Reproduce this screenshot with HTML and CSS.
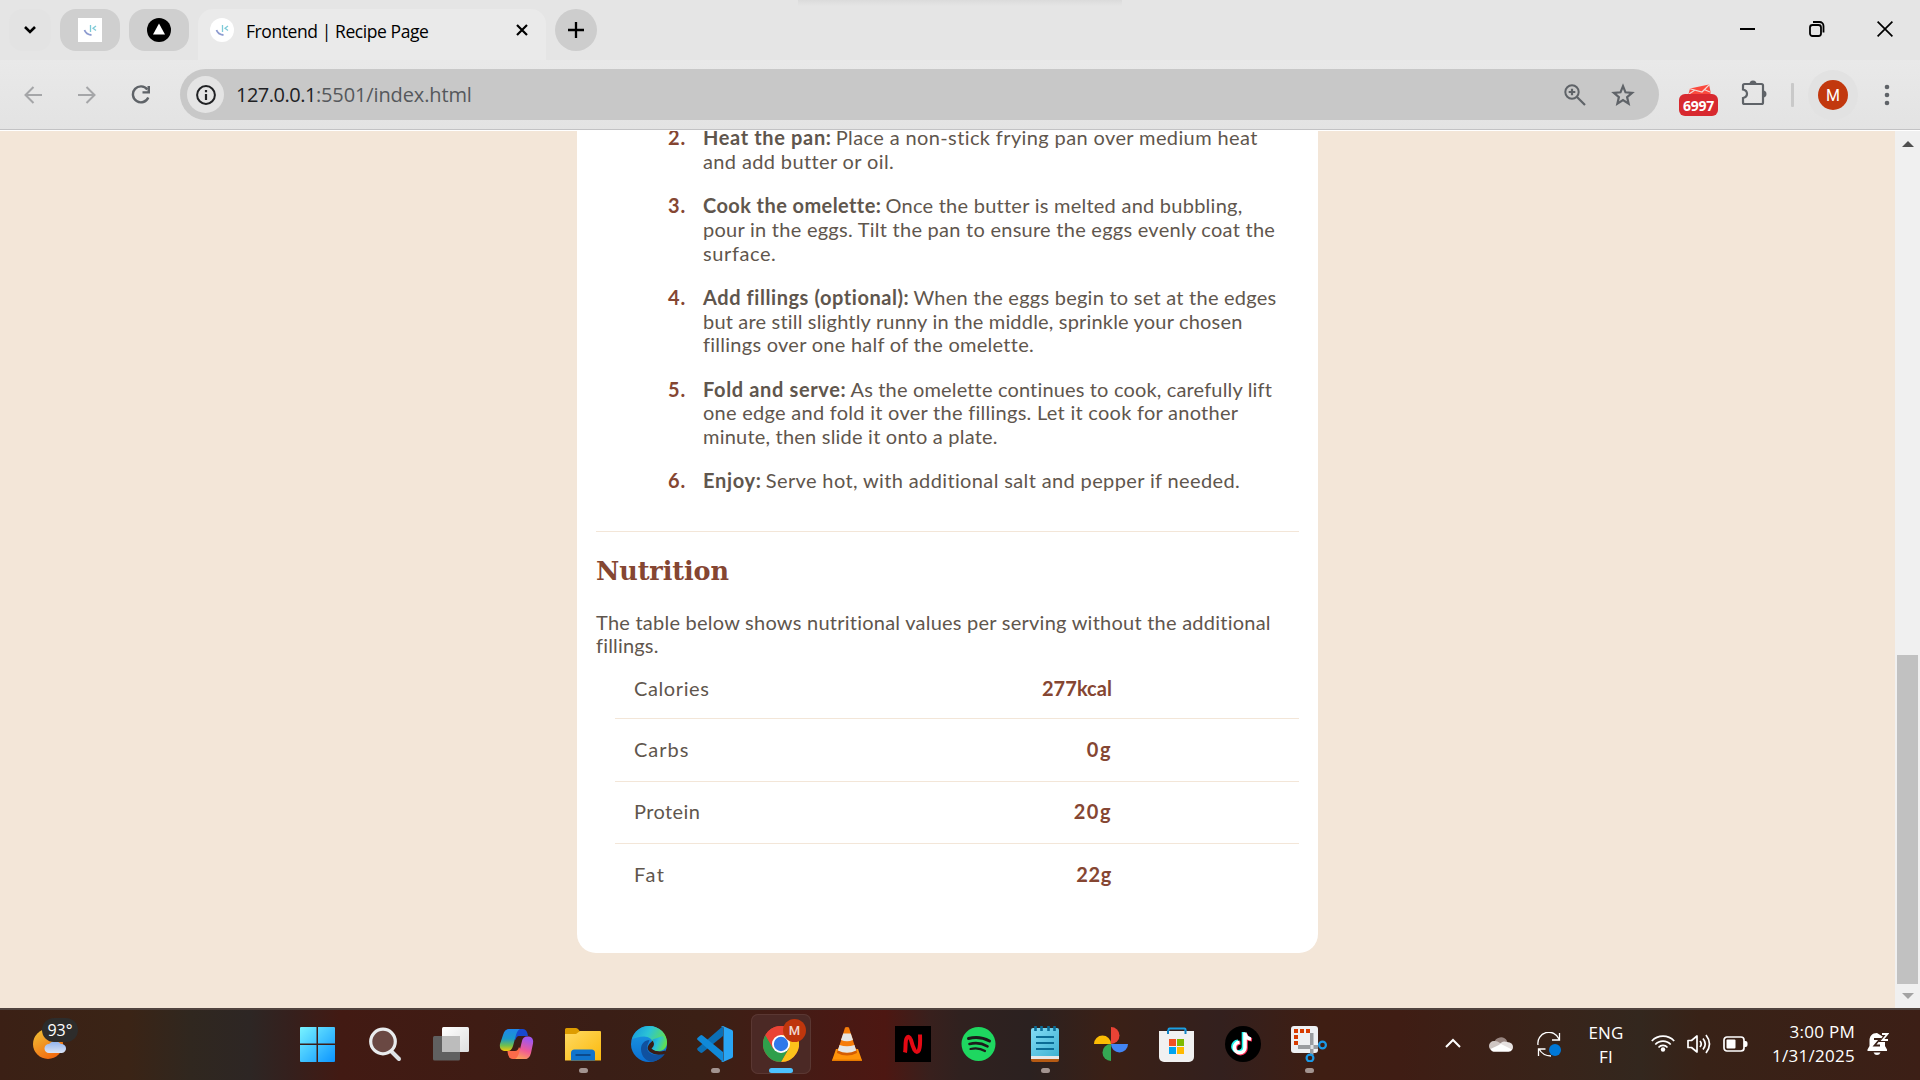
FILE: index.html
```html
<!DOCTYPE html>
<html lang="en">
<head>
<meta charset="utf-8">
<title>Frontend | Recipe Page</title>
<link rel="stylesheet" href="styles.css">
</head>
<body>
<div class="screen">
  <header class="tabstrip">
    <div class="tab-search"><svg width="14" height="10" viewBox="0 0 14 10"><path d="M2 2l5 5 5-5" fill="none" stroke="#000" stroke-width="2.6"/></svg></div>
    <div class="pinned"><svg width="24" height="24" viewBox="0 0 24 24"><rect width="24" height="24" fill="#fff"/><path d="M6.500 12q1.500 4.500 7 5" fill="none" stroke="#8d9bd0" stroke-width="1.800"/><path d="M12.500 7v7M18 8l-3 2.300 3 2.300" fill="none" stroke="#7fcbd8" stroke-width="1.300"/></svg></div>
    <div class="pinned pinned-next"><svg width="24" height="24" viewBox="0 0 24 24"><circle cx="12" cy="12" r="12"/><path d="M12 5.500L18 16.500H6z" fill="#fff"/></svg></div>
    <div class="tab">
      <svg width="24" height="24" viewBox="0 0 24 24"><circle cx="12" cy="12" r="12" fill="#fff"/><path d="M6.500 12q1.500 4.500 7 5" fill="none" stroke="#8d9bd0" stroke-width="1.800"/><path d="M12.500 7v7M18 8l-3 2.300 3 2.300" fill="none" stroke="#7fcbd8" stroke-width="1.300"/></svg>
      <span class="tab-title">Frontend | Recipe Page</span>
      <svg class="tab-close" width="12" height="12" viewBox="0 0 12 12"><path d="M1 1l10 10M11 1L1 11" stroke="#000" stroke-width="2.200"/></svg>
    </div>
    <div class="new-tab"><svg width="16" height="16" viewBox="0 0 16 16"><path d="M8 0v16M0 8h16" stroke="#000" stroke-width="2.300"/></svg></div>
    <div class="window-controls">
      <svg width="16" height="16" viewBox="0 0 16 16"><path d="M0 8h15" stroke="#000" stroke-width="2"/></svg>
      <svg width="16" height="16" viewBox="0 0 16 16"><rect x="1" y="4" width="11" height="11" rx="2.500" fill="none" stroke="#000" stroke-width="1.800"/><path d="M4 1h6.500a4 4 0 0 1 4 4v6.500" fill="none" stroke="#000" stroke-width="1.800"/></svg>
      <svg width="16" height="16" viewBox="0 0 16 16"><path d="M.6.600l14.800 14.800M15.400.600L.6 15.400" stroke="#000" stroke-width="1.700"/></svg>
    </div>
  </header>

  <div class="toolbar">
    <div class="nav">
      <svg width="18" height="18" viewBox="0 0 18 18"><path d="M18 9H1.500M9.500 1L1.500 9l8 8" fill="none" stroke="#a5a6a8" stroke-width="2"/></svg>
      <svg width="18" height="18" viewBox="0 0 18 18"><path d="M0 9h16.500M8.500 1l8 8-8 8" fill="none" stroke="#a5a6a8" stroke-width="2"/></svg>
      <svg width="20" height="20" viewBox="0 0 20 20"><path d="M17.300 12.500a8 8 0 1 1-1-8" fill="none" stroke="#5f6368" stroke-width="2.400"/><path d="M19 1v7.500h-7.500V6.200h5V1z" fill="#5f6368"/></svg>
    </div>
    <div class="omnibox">
      <span class="site-info"><svg width="20" height="20" viewBox="0 0 20 20"><circle cx="10" cy="10" r="8.900" fill="none" stroke="#202124" stroke-width="2"/><path d="M10 9v6M10 5v2.200" stroke="#202124" stroke-width="2.200"/></svg></span>
      <span class="url"><span class="host">127.0.0.1</span><span class="path">:5501/index.html</span></span>
      <svg class="zoom-icon" width="22" height="22" viewBox="0 0 22 22"><circle cx="8" cy="8" r="6.700" fill="none" stroke="#5f6368" stroke-width="2"/><path d="M8 4.700v6.600M4.700 8h6.600M13 13l8 8" fill="none" stroke="#5f6368" stroke-width="2.200"/></svg>
      <svg width="24" height="24" viewBox="0 0 24 24"><path d="M12 3.200l2.500 6.100 6.600.5-5 4.300 1.500 6.500-5.600-3.500-5.600 3.500 1.500-6.500-5-4.300 6.600-.5z" fill="none" stroke="#5f6368" stroke-width="2.200"/></svg>
    </div>
    <div class="mail">
      <svg width="24" height="10" viewBox="0 0 24 10"><path d="M1.500 10L3 4.500 22 .500l1.500 7V10z" fill="#fb4a3e"/><path d="M2 4.500l13 3.500 7.500-7.500M2 10l6-4M23 8l-6-2.500" fill="none" stroke="#f2dcda" stroke-width="1.200"/></svg>
      <span class="mail-count">6997</span>
    </div>
    <svg class="puzzle" width="26" height="26" viewBox="0 0 26 26"><path d="M3.500 4h17a1.500 1.500 0 0 1 1.500 1.500v17a1.500 1.500 0 0 1-1.500 1.500h-17a1.500 1.500 0 0 1-1.500-1.500V18q4-1 4-4.300T2 9.500v-4A1.500 1.500 0 0 1 3.500 4z" fill="none" stroke="#5f6368" stroke-width="2.200"/><path d="M8.500 4a3.500 3.500 0 0 1 7 0zM22 10.500a3.500 3.500 0 0 1 0 7z" fill="#5f6368"/></svg>
    <span class="divider"></span>
    <span class="avatar-halo"><span class="avatar">M</span></span>
    <svg class="menu" width="6" height="22" viewBox="0 0 6 22"><g fill="#5f6368"><circle cx="3" cy="3" r="2.300"/><circle cx="3" cy="11" r="2.300"/><circle cx="3" cy="19" r="2.300"/></g></svg>
  </div>

  <main class="viewport">
    <div class="page">
      <article class="card">
        <ol class="steps">
          <li><span class="num">2.</span><p><span class="line"><b class="ls64">Heat the pan:</b> <span class="ls38">Place a non-stick frying pan over medium heat</span></span><span class="line ls37">and add butter or oil.</span></p></li>
          <li><span class="num">3.</span><p><span class="line"><b class="ls41">Cook the omelette:</b> <span class="ls25">Once the butter is melted and bubbling,</span></span><span class="line ls26">pour in the eggs. Tilt the pan to ensure the eggs evenly coat the</span><span class="line ls60">surface.</span></p></li>
          <li><span class="num">4.</span><p><span class="line"><b class="ls57">Add fillings (optional):</b> <span class="ls25">When the eggs begin to set at the edges</span></span><span class="line ls18">but are still slightly runny in the middle, sprinkle your chosen</span><span class="line ls26">fillings over one half of the omelette.</span></p></li>
          <li><span class="num">5.</span><p><span class="line"><b class="ls64">Fold and serve:</b> <span class="ls16">As the omelette continues to cook, carefully lift</span></span><span class="line ls27">one edge and fold it over the fillings. Let it cook for another</span><span class="line ls21">minute, then slide it onto a plate.</span></p></li>
          <li><span class="num">6.</span><p><span class="line"><b class="ls70">Enjoy:</b> <span class="ls37">Serve hot, with additional salt and pepper if needed.</span></span></p></li>
        </ol>
        <section class="nutrition">
          <h2>Nutrition</h2>
          <p><span class="line ls24">The table below shows nutritional values per serving without the additional</span><span class="line ls18">fillings.</span></p>
          <dl class="facts">
            <div class="fact"><dt class="ls60">Calories</dt><dd class="ls04">277kcal</dd></div>
            <div class="fact"><dt class="ls100">Carbs</dt><dd class="ls150">0g</dd></div>
            <div class="fact"><dt class="ls41">Protein</dt><dd class="ls150">20g</dd></div>
            <div class="fact"><dt class="ls150">Fat</dt><dd class="ls64">22g</dd></div>
          </dl>
        </section>
      </article>
    </div>
    <div class="scrollbar">
      <svg width="12" height="6" viewBox="0 0 12 6"><path d="M0 6l6-6 6 6z" fill="#505050"/></svg>
      <span class="thumb"></span>
      <svg width="12" height="6" viewBox="0 0 12 6"><path d="M0 0l6 6 6-6z" fill="#a3a3a3"/></svg>
    </div>
  </main>

  <footer class="taskbar">
    <div class="weather">
      <svg width="34" height="32" viewBox="0 0 34 32"><defs><linearGradient id="sun" x1="0" y1="0" x2=".6" y2="1"><stop offset="0" stop-color="#efc437"/><stop offset="1" stop-color="#f26a10"/></linearGradient><linearGradient id="cl" x1="0" y1="0" x2="0" y2="1"><stop offset="0" stop-color="#8fb2ee"/><stop offset="1" stop-color="#dbe4f6"/></linearGradient></defs><circle cx="15" cy="16" r="15" fill="url(#sun)"/><path d="M16 25a4.500 4.500 0 0 1 0-9 8 8 0 0 1 12 0 4.500 4.500 0 0 1 1 9z" fill="url(#cl)"/></svg>
      <span class="temp">93°</span>
    </div>
    <nav class="apps">
      <div class="app"><svg width="36" height="36" viewBox="0 0 36 36"><defs><linearGradient id="w" gradientUnits="userSpaceOnUse" x1="0" y1="0" x2="36" y2="36"><stop offset="0" stop-color="#7af5ff"/><stop offset="1" stop-color="#0a93ff"/></linearGradient></defs><path d="M0 2a1 1 0 0 1 1-1h15.500v16.500H0zM18 1h16a1 1 0 0 1 1 1v15.500H18zM0 19h16.500v17H1a1 1 0 0 1-1-1zM18 19h17v16a1 1 0 0 1-1 1H18z" fill="url(#w)"/></svg></div>
      <div class="app"><svg width="36" height="36" viewBox="0 0 36 36"><path d="M24 25l8 8" stroke="#dce1e6" stroke-width="4" stroke-linecap="round"/><circle cx="16" cy="15.500" r="12.300" fill="#6a4843" stroke="#e9ecee" stroke-width="3.200"/></svg></div>
      <div class="app"><svg width="36" height="36" viewBox="0 0 36 36"><defs><linearGradient id="tv" x1="0" y1="0" x2="1" y2="1"><stop offset="0" stop-color="#fff"/><stop offset="1" stop-color="#dedede"/></linearGradient></defs><rect x="0" y="10" width="27" height="24.500" rx="1.500" fill="#606060"/><rect x="9" y="1" width="27" height="25" rx="1.500" fill="url(#tv)"/><path d="M9 10h18v16H10.500A1.500 1.500 0 0 1 9 24.500z" fill="#bcbcbc"/></svg></div>
      <div class="app"><svg width="36" height="36" viewBox="0 0 36 36"><defs><linearGradient id="c1" x1="0" y1="0" x2="0" y2="1"><stop offset="0" stop-color="#1f86ea"/><stop offset=".45" stop-color="#1b9ac8"/><stop offset=".75" stop-color="#6fbf50"/><stop offset="1" stop-color="#f2c70c"/></linearGradient><linearGradient id="c2" x1=".3" y1="0" x2="0" y2="1"><stop offset="0" stop-color="#a157ee"/><stop offset=".5" stop-color="#ee5a96"/><stop offset="1" stop-color="#ffac4e"/></linearGradient></defs><path d="M8 3h16q4 0 5 7h-9q-2.500 0-3.500 4z" fill="#1749cf"/><path d="M28 33H14q-5 0-5.500-8H16q3 0 4-4z" fill="#fb6b4a"/><path d="M10 3h11q-2.500 1-4 6l-3 11q-1.500 5-5 5H5q-5-1-4-7L4 9q1.500-6 6-6z" fill="url(#c1)"/><path d="M26 33H16q2.500-1 4-6l3-12q1-4.500 5-4.500h2q5 1 4 7L32 27q-1.500 6-6 6z" fill="url(#c2)"/></svg></div>
      <div class="app"><svg width="36" height="36" viewBox="0 0 36 36"><defs><linearGradient id="fo" x1="0" y1="0" x2="1" y2="1"><stop offset="0" stop-color="#ffda62"/><stop offset="1" stop-color="#fbb90d"/></linearGradient></defs><path d="M0 3.500A1.500 1.500 0 0 1 1.500 2H11q1.500 0 2.500 1.500L15 5.500v4H0z" fill="#dd9c00"/><path d="M0 8h11l4-3h20a1 1 0 0 1 1 1v28.500H0z" fill="url(#fo)"/><path d="M6 34.500V27a3.500 3.500 0 0 1 3.500-3.500h17A3.500 3.500 0 0 1 30 27v7.500z" fill="#1074cc"/><path d="M10.500 29h15" stroke="#0b4a8c" stroke-width="2"/></svg><i class="run"></i></div>
      <div class="app"><svg width="36" height="36" viewBox="0 0 36 36"><defs><linearGradient id="e1" x1="0" y1="0" x2="1" y2=".4"><stop offset="0" stop-color="#1394df"/><stop offset=".5" stop-color="#2bc3d6"/><stop offset="1" stop-color="#62e04e"/></linearGradient><linearGradient id="e2" x1="0" y1="0" x2="0" y2="1"><stop offset="0" stop-color="#1c9be4"/><stop offset="1" stop-color="#0b6fd2"/></linearGradient></defs><circle cx="18" cy="18" r="18" fill="url(#e2)"/><path d="M1 13C4 4 11 0 18 0c11 0 18 8 18 16 0 6-4 9-9 9-4 0-7-1.500-7-3 0-1 2-1.500 2-4.500 0-4-4-7-9-7-5 0-9 1.500-12 2.500z" fill="url(#e1)"/><path d="M18.500 14c-5 0-8.500 4-8.500 9 0 8 6 12.500 11 12.700C28 34.500 32 31 34.300 27c-8 4-20 1.500-18-7 .4-2 1.500-3.500 2.200-6z" fill="#10519f"/><path d="M22 14.500q3 6-.5 8.500 4 4 13 1.500l.5 3q-10 3-16-1.500t3-11.500z" fill="#3a1d15"/><path d="M21.500 13.500C24 18 23 20 20.500 22.500c3 3 9 3 12.500.5 4-4 3-10-1-13z" fill="url(#e1)"/></svg></div>
      <div class="app"><svg width="36" height="36" viewBox="0 0 36 36"><path d="M26 0v10L5.500 26.600q-1.200.8-2.200 0L.7 24.300q-1.200-1.200 0-2.400z" fill="#0b6fb5"/><path d="M26 36V26L5.500 9.400q-1.200-.8-2.200 0L.7 11.700q-1.200 1.200 0 2.400z" fill="#1089d8"/><path d="M26 0l9 4q1 .6 1 1.800v24.400q0 1.200-1 1.800l-9 4q-1.500 0-2-1 2.500 1 2.500-1V2q0-2-2.500-1 .5-1 2-1z" fill="#29a5f4"/></svg><i class="run"></i></div>
      <div class="app active"><svg width="36" height="36" viewBox="0 0 36 36"><circle cx="18" cy="18" r="18" fill="#ea4335"/><path d="M18 9h15.600A18 18 0 0 1 18 36l7.800-13.500z" fill="#fcc21b"/><path d="M2.400 9A18 18 0 0 0 18 36l7.800-13.500L18 27l-7.800-4.500z" fill="#2f9f4b"/><path d="M2.400 9l7.800 13.500L18 9h15.600A18 18 0 0 0 2.400 9z" fill="#ea4335"/><circle cx="18" cy="18" r="9" fill="#fff"/><circle cx="18" cy="18" r="7.200" fill="#2f79ea"/></svg><b class="profile">M</b><i class="run wide"></i></div>
      <div class="app"><svg width="36" height="36" viewBox="0 0 36 36"><path d="M7 23h22l4 11.500H3z" fill="#ff9309"/><path d="M3 33.500h30v1.500H3z" fill="#e77a00"/><path d="M9 22q9 3.500 18 0l1 5q-10 5-20 0z" fill="#d55d02"/><path d="M16 1.500q2-1 4 0L27 24q-9 5-18 0z" fill="#f67d0a"/><path d="M14.200 7.500h7.600L24 14q-6 2.500-12 0zM10.500 19q7.500 2.500 15 0l1.700 5.500q-9.200 4.500-18.400 0z" fill="#e6e6e4"/></svg></div>
      <div class="app"><svg width="36" height="36" viewBox="0 0 36 36"><rect width="36" height="36"/><path d="M10 26.500C11 22 10 15 11.500 12.500q2-4 4.500 1.500 1.500 6 3.500 10 2.500 4 4.500 0 1.500-4 1-15.500" fill="none" stroke="#e50914" stroke-width="4"/></svg></div>
      <div class="app"><svg width="36" height="36" viewBox="0 0 36 36"><circle cx="17.500" cy="18" r="17" fill="#1ed760"/><g fill="none" stroke="#1c1a1b" stroke-linecap="round"><path d="M7.500 12.500q11-3 21 2.500" stroke-width="3"/><path d="M8.500 18q9.500-2.500 18 2.300" stroke-width="2.600"/><path d="M9.500 23q8-2 14.500 2" stroke-width="2.200"/></g></svg></div>
      <div class="app"><svg width="36" height="36" viewBox="0 0 36 36"><defs><linearGradient id="n" x1="0" y1="0" x2="1" y2="1"><stop offset="0" stop-color="#83dcf5"/><stop offset="1" stop-color="#3fb2d2"/></linearGradient></defs><rect x="4" y="28" width="28" height="8" rx="2" fill="#b65a13"/><rect x="4" y="26" width="28" height="7" fill="#e8e8e8"/><path d="M6 2h24a2 2 0 0 1 2 2v26H4V4a2 2 0 0 1 2-2z" fill="url(#n)"/><path d="M9 11h18M9 17h18M9 23h18" stroke="#0b6c95" stroke-width="2"/><path d="M8.500 0v5M14.500 0v5M21.500 0v5M27.500 0v5" stroke="#0b6c95" stroke-width="2.600"/></svg><i class="run"></i></div>
      <div class="app"><svg width="36" height="36" viewBox="0 0 36 36"><path d="M18 1a8.500 8.500 0 0 1 0 17z" fill="#ea4335"/><path d="M35 18a8.500 8.500 0 0 1-17 0z" fill="#4285f4"/><path d="M18 35a8.500 8.500 0 0 1 0-17z" fill="#34a853"/><path d="M1 18a8.500 8.500 0 0 1 17 0z" fill="#fbbc04"/></svg></div>
      <div class="app"><svg width="36" height="36" viewBox="0 0 36 36"><path d="M9.500 8V3.500a1 1 0 0 1 1-1h15a1 1 0 0 1 1 1V8" fill="none" stroke="#1aa0e4" stroke-width="2"/><path d="M0 5h35v26a5 5 0 0 1-5 5H5a5 5 0 0 1-5-5z" fill="#f1f1f1"/><path d="M9 8V4M26.500 8V4" stroke="#1283c4" stroke-width="2"/><path d="M10 13h7v7h-7z" fill="#f25022"/><path d="M18 13h7v7h-7z" fill="#7fba00"/><path d="M10 21h7v7h-7z" fill="#00a4ef"/><path d="M18 21h7v7h-7z" fill="#ffb900"/></svg></div>
      <div class="app"><svg width="36" height="36" viewBox="0 0 36 36"><circle cx="18" cy="18" r="18"/><g fill="none" stroke-width="3.600"><path d="M20 7v14.500a5.300 5.300 0 1 1-5.500-5.300M20 7.500q1 5 6 5.500" stroke="#25f4ee" transform="translate(-1.500 -1)"/><path d="M20 7v14.500a5.300 5.300 0 1 1-5.500-5.300M20 7.500q1 5 6 5.500" stroke="#fe2c55" transform="translate(1 .8)"/><path d="M20 6.500v15a5.300 5.300 0 1 1-5.500-5.300M20 7.500q1 5 6 5.500" stroke="#fff"/></g></svg></div>
      <div class="app"><svg width="36" height="36" viewBox="0 0 36 36"><rect width="27" height="27" rx="3" fill="#eef0f3"/><path d="M3 5h17M5 3v17" fill="none" stroke="#d83b01" stroke-width="4" stroke-dasharray="4 2"/><path d="M19 7h3.500v22H19zM7 19h20v4H7z" fill="#9a9da1"/><path d="M19.500 19h3v4h-3z" fill="#dfe2e5"/><circle cx="31.500" cy="19" r="3.400" fill="none" stroke="#1a9ae8" stroke-width="2.200"/><circle cx="19" cy="32" r="3.400" fill="none" stroke="#1a9ae8" stroke-width="2.200"/></svg><i class="run"></i></div>
    </nav>
    <div class="tray">
      <svg class="chevron" width="16" height="10" viewBox="0 0 16 10"><path d="M1 9l7-7 7 7" fill="none" stroke="#fff" stroke-width="2"/></svg>
      <svg class="cloud" width="24" height="16" viewBox="0 0 24 16"><path d="M5 7a7 7 0 0 1 13-2l2 6H4z" fill="#988580"/><path d="M5 15A5 5 0 0 1 5 5q3-.5 6 2l9 5-3 3z" fill="#cfc6c3"/><path d="M10 9q3-5 8-3 6 .5 6 5a4 4 0 0 1-4 4z" fill="#e6e1e0"/><path d="M1.500 13L12 8l11 5.500q-1 2.200-3.500 2.200H4.500Q2.500 15.700 1.500 13z" fill="#fff"/></svg>
      <svg class="sync" width="24" height="25" viewBox="0 0 24 25"><path d="M1 13A11 11 0 0 1 22 7M22.500 1v7H15M1.500 24v-7h7M2 17q4 7 12 7" fill="none" stroke="#fff" stroke-width="1.300"/><circle cx="18" cy="18" r="6" fill="#0078d7"/></svg>
      <div class="lang"><span>ENG</span><span>FI</span></div>
      <svg class="wifi" width="24" height="18" viewBox="0 0 24 18"><g fill="none" stroke="#fff" stroke-width="1.700"><path d="M.8 7a15.500 15.500 0 0 1 22.400 0M4.300 10.500a10.500 10.500 0 0 1 15.400 0M7.500 13.500a6 6 0 0 1 9 0"/></g><circle cx="12" cy="15.500" r="2.200" fill="#fff"/></svg>
      <svg class="volume" width="24" height="20" viewBox="0 0 24 20"><g fill="none" stroke="#fff" stroke-width="1.700" stroke-linejoin="round"><path d="M1 6.500h3.500L10 2v16l-5.500-4.500H1zM13 7q2.500 3 0 6M16 4.500q4.500 5.500 0 11M19 1q7 9 0 18"/></g></svg>
      <svg class="battery" width="25" height="16" viewBox="0 0 25 16"><rect x="1" y="1" width="20" height="14" rx="3" fill="none" stroke="#fff" stroke-width="1.700"/><rect x="3.500" y="3.500" width="9" height="9" rx="1" fill="#fff"/><path d="M21 5h1.500a2 2 0 0 1 2 2v2a2 2 0 0 1-2 2H21z" fill="#fff"/></svg>
      <div class="clock"><span>3:00 PM</span><span>1/31/2025</span></div>
      <svg class="bell" width="22" height="24" viewBox="0 0 22 24"><path d="M10 1C5 1 2.500 4.500 2.500 8.500V14L.5 17.500V19H20v-1.500L18 14V6z" fill="#fff"/><path d="M6.500 20.500h7q-1 2.500-3.500 2.500t-3.500-2.500z" fill="#fff"/><path d="M7 7h6l-5.500 6.500H13" fill="none" stroke="#381f16" stroke-width="1.800"/><path d="M15 2h5.500L15.500 8H21" fill="none" stroke="#381f16" stroke-width="4"/><path d="M15 2h5.500L15.500 8H21" fill="none" stroke="#fff" stroke-width="1.800"/></svg>
    </div>
  </footer>
</div>
</body>
</html>
```
FILE: styles.css
```css
* { box-sizing: border-box; }
body { margin: 0; font-family: "Open Sans", "Noto Sans", sans-serif; }
svg { display: block; flex: none; }
p, h2, ol, dl, dd { margin: 0; padding: 0; }

.screen { width: 1920px; height: 1080px; display: flex; flex-direction: column; overflow: hidden; }

/* browser tabs */
.tabstrip {
  height: 60px; flex: none; display: flex; padding: 9px 20px 0 9px;
  background: linear-gradient(#dbdbdb, rgba(229,229,229,0)) 798px 0 / 324px 6px no-repeat #e5e5e5;
}
.tab-search, .pinned, .new-tab { height: 42px; display: flex; align-items: center; justify-content: center; }
.tab-search { width: 42px; border-radius: 14px; background: #e3e3e3; }
.pinned { width: 60px; margin-left: 9px; border-radius: 16px; background: #cfcfcf; }
.pinned svg { margin-top: -1px; }
.tab {
  width: 348px; height: 51px; margin-left: 9px; padding: 0 18px 9px 12px; display: flex; align-items: center;
  border-radius: 15px 15px 0 0; background: #eaeaea;
}
.tab-title { margin: 2px 0 0 12px; font-size: 17.5px; letter-spacing: -.42px; line-height: 24px; white-space: nowrap; }
.tab-close { margin-left: auto; }
.new-tab { width: 42px; margin-left: 9px; border-radius: 50%; background: #cdcdcd; }
.window-controls { margin: 12px 7px 0 auto; display: flex; gap: 52.5px; }

/* address bar */
.toolbar {
  height: 70px; flex: none; display: flex; align-items: center; padding: 0 29px 0 24px;
  background: linear-gradient(#e9e9e9, #e3e3e3); border-bottom: 1px solid #c2c2c4;
}
.nav { display: flex; align-items: center; gap: 36px; width: 156px; }
.nav svg:nth-child(3) { margin-left: -1px; }
.omnibox {
  width: 1479px; height: 51px; display: flex; align-items: center; padding: 0 24px 0 7px;
  border-radius: 26px; background: #c8c8c8;
}
.site-info { width: 37px; height: 37px; display: flex; align-items: center; justify-content: center; border-radius: 50%; background: #e4e4e4; }
.url { margin-left: 12px; font-size: 20px; line-height: 28px; white-space: nowrap; color: #55585c; letter-spacing: -.12px; }
.host { color: #202124; letter-spacing: -.5px; }
.zoom-icon { margin: 0 25px 0 auto; }
.mail { width: 39px; margin: 11px 24px 0 20px; display: flex; flex-direction: column; align-items: center; }
.mail-count {
  width: 39px; height: 22px; border-radius: 6px; background: #d8292f; color: #fff;
  font-size: 14px; font-weight: 700; line-height: 23px; text-align: center; letter-spacing: -.2px;
}
.puzzle { margin: -4px 1px 0 -1px; }
.divider { width: 3px; height: 24px; margin-left: 23px; background: #c9c9c9; border-radius: 1px; }
.avatar-halo { width: 50px; height: 50px; margin-left: 14px; display: flex; align-items: center; justify-content: center; border-radius: 50%; background: #e2e2e2; }
.avatar { width: 30px; height: 30px; border-radius: 50%; background: #c2380e; color: #fff; font: 400 16px/31px Roboto, sans-serif; text-align: center; }
.menu { margin-left: 26px; }

/* recipe page */
.viewport { height: 878px; flex: none; display: flex; overflow: hidden; border-top: 1px solid #fff; }
.page { width: 1895px; background: #f3e6d8; display: flex; justify-content: center; align-items: flex-start; overflow: hidden; }
.card {
  width: 741px; height: 827px; margin-top: -5px; padding: 0 19px 0 19px; border-radius: 0 0 19px 19px;
  background: #fff; color: #5f564d; font: 20px/23.75px Lato, sans-serif; white-space: nowrap;
}
.line { display: block; }
.steps { list-style: none; height: 406px; padding: 0 0 0 72px; display: flex; flex-direction: column; gap: 20.5px; border-bottom: 1px solid #f3e6d8; }
.steps li { display: flex; }
.steps b { margin-right: -1px; }
.num { width: 35px; font-weight: 700; letter-spacing: 1px; color: #854632; }
.nutrition h2 { padding-top: 23px; font: 700 25.5px/32px "DejaVu Serif", serif; color: #854632; letter-spacing: -.1px; }
.nutrition > p { padding-top: 23.5px; }
.facts { padding: 6px 0 0 19px; }
.fact { height: 62.5px; display: flex; align-items: center; justify-content: space-between; padding: 0 187px 0 19px; border-bottom: 1px solid #f3e6d8; }
.fact:first-child { height: 55px; padding-bottom: 5px; }
.fact:last-child { border-bottom: 0; }
.fact dd { font-weight: 700; color: #854632; }

/* per-line tracking */
.ls04 { letter-spacing: .04px; }
.ls16 { letter-spacing: .16px; }
.ls18 { letter-spacing: .18px; }
.ls21 { letter-spacing: .21px; }
.ls24 { letter-spacing: .24px; }
.ls25 { letter-spacing: .25px; }
.ls26 { letter-spacing: .26px; }
.ls27 { letter-spacing: .27px; }
.ls37 { letter-spacing: .37px; }
.ls38 { letter-spacing: .38px; }
.ls41 { letter-spacing: .41px; }
.ls57 { letter-spacing: .57px; }
.ls60 { letter-spacing: .6px; }
.ls64 { letter-spacing: .64px; }
.ls70 { letter-spacing: .7px; }
.ls100 { letter-spacing: 1px; }
.ls150 { letter-spacing: 1.5px; }

.scrollbar { width: 25px; background: #f0f0f0; display: flex; flex-direction: column; align-items: center; padding: 10px 0 9px; }
.thumb { width: 21px; height: 329px; margin: auto 0 9px; background: #c1c1c1; }

/* taskbar */
.taskbar {
  height: 72px; flex: none; display: flex; color: #fff; border-top: 2px solid #50433e;
  background: linear-gradient(90deg, #3b2015 0, #3a2416 130px, #30271f 190px, #2d2624 250px, #35201d 290px, #421a13 340px, #3f1c14 480px, #3a1e16 600px, #3b2015 700px, #451b15 800px, #4d1712 885px, #38201d 930px, #30211f 960px, #2b2120 1030px, #3b2016 1110px, #33201e 1220px, #3f1e13 1320px, #3f1d14 1400px, #38241a 1560px, #33271e 1640px, #382217 1700px, #3c1f16 1920px);
}
.weather { position: relative; width: 286px; padding: 18px 0 0 33px; }
.temp {
  position: absolute; left: 42px; top: 8px; width: 36px; height: 24px; border-radius: 12px;
  background: #2d2c2b; font-size: 16px; line-height: 24px; text-align: center; letter-spacing: -.1px;
}
.apps { display: flex; padding-top: 4px; }
.app { position: relative; width: 60px; height: 60px; margin: 0 3px; padding: 12px 0 0 12px; border-radius: 7px; }
.app:first-child { padding-left: 11px; }
.active { background: #4b2925; box-shadow: inset 0 0 0 1px #5a3732; }
.run { position: absolute; left: 26px; top: 54px; width: 9px; height: 5px; border-radius: 3px; background: #a39490; }
.wide { left: 18px; width: 24px; background: #4cc2ff; }
.profile { position: absolute; left: 32px; top: 5px; width: 23px; height: 23px; border-radius: 50%; background: #bf360c; color: #f0d9d1; font: 500 13px/23px Roboto, sans-serif; text-align: center; }
.tray { display: flex; align-items: flex-start; margin-left: 103px; font-size: 17px; line-height: 24px; letter-spacing: .2px; white-space: nowrap; }
.lang, .clock { display: flex; flex-direction: column; }
.chevron { margin-top: 28px; }
.cloud { margin: 26px 0 0 28px; }
.sync { margin: 22px 0 0 24px; }
.lang { width: 40px; margin: 11px 0 0 25px; line-height: 23.5px; align-items: center; }
.wifi { margin: 24px 0 0 25px; }
.volume { margin: 24px 0 0 12px; }
.battery { margin: 26px 0 0 12px; }
.clock { width: 83px; margin: 10px 0 0 24px; text-align: right; letter-spacing: .28px; }
.bell { margin: 22px 0 0 12px; }
```
